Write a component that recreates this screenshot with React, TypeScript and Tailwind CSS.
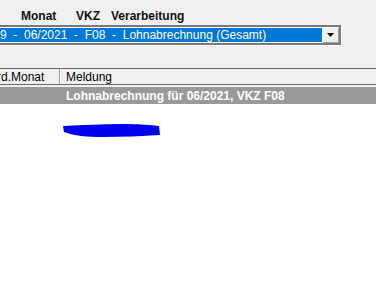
export default function App() {
  return (
    <div className="w-[376px] h-[287px] overflow-hidden bg-white font-['Liberation_Sans',Arial,sans-serif] text-[12px] text-black">
      {/* top panel */}
      <div className="bg-[#f0f0f0] pt-[6px]">
        {/* field labels */}
        <div className="flex h-[19px] items-center font-bold text-[#101010]">
          <span className="ml-[21px] w-[55px]">Monat</span>
          <span className="w-[35px]">VKZ</span>
          <span>Verarbeitung</span>
        </div>

        {/* combobox */}
        <div className="w-[342px] border-b border-r border-white">
          <div className="flex h-[20px] border-2 border-[#7a7a7a] border-l-0 bg-white">
            <div className="flex-1 flex items-center bg-[#0078d7] text-white whitespace-pre my-[1px] leading-none">
              {'9  -  06/2021  -  F08  -  Lohnabrechnung (Gesamt)'}
            </div>
            <div className="w-[17px] flex items-center justify-center bg-[#f0f0f0] border border-t-white border-l-white border-b-[#a0a0a0] border-r-[#a0a0a0]">
              <svg width="7" height="4" viewBox="0 0 7 4">
                <path d="M0 0h7L3.5 4z" fill="#000" />
              </svg>
            </div>
          </div>
        </div>

        <div className="h-[22px]" />

        {/* column headers */}
        <div className="flex h-[17px] border-y border-[#6a6a6a] items-center">
          <div className="w-[63px] h-full flex items-center border-r border-[#a0a0a0] -ml-[3px]">rd.Monat</div>
          <div className="pl-[5px] border-l border-white h-full flex items-center">Meldung</div>
        </div>
        <div className="h-[2px]" />
      </div>

      {/* group band */}
      <div className="h-[17px] bg-[#999999] flex items-center pl-[66px] font-bold text-white">
        Lohnabrechnung für 06/2021, VKZ F08
      </div>

      {/* redacted entry */}
      <div className="pl-[62px] pt-[19px]">
        <svg width="99" height="16" viewBox="0 0 99 16">
          <path
            d="M1 3 C20 2 40 1 60 1 C75 1 90 2 97 3 L98 12 C80 13 60 14 40 14 C25 14 12 13 2 9 Z"
            fill="#0000f0"
          />
        </svg>
      </div>
    </div>
  )
}
